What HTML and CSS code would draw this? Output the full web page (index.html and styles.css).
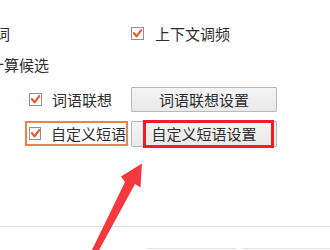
FILE: index.html
```html
<!DOCTYPE html>
<html lang="zh">
<head>
<meta charset="utf-8">
<link rel="stylesheet" href="styles.css">
</head>
<body>
<div class="page">
  <div class="top-row">
    <span class="cut-word">词</span>
    <label class="check ctx-check">
      <span class="box"><svg viewBox="0 0 13 13" width="13" height="13"><path d="M3 6.2 L5.6 9.4 L10.2 3.2" fill="none" stroke="#ec5a2a" stroke-width="2.2" stroke-linecap="round" stroke-linejoin="round"/></svg></span>
      <span>上下文调频</span>
    </label>
  </div>
  <div class="section-title">计算候选</div>
  <div class="option-row">
    <label class="check opt-label">
      <span class="box"><svg viewBox="0 0 13 13" width="13" height="13"><path d="M3 6.2 L5.6 9.4 L10.2 3.2" fill="none" stroke="#ec5a2a" stroke-width="2.2" stroke-linecap="round" stroke-linejoin="round"/></svg></span>
      <span>词语联想</span>
    </label>
    <button class="btn">词语联想设置</button>
  </div>
  <div class="option-row row-gap">
    <label class="check opt-label marked-orange">
      <span class="box"><svg viewBox="0 0 13 13" width="13" height="13"><path d="M3 6.2 L5.6 9.4 L10.2 3.2" fill="none" stroke="#ec5a2a" stroke-width="2.2" stroke-linecap="round" stroke-linejoin="round"/></svg></span>
      <span>自定义短语</span>
    </label>
    <button class="btn btn-marked">自定义短语设置<span class="red-mark"></span></button>
  </div>
  <div class="divider"></div>
  <div class="bottom-buttons">
    <span class="edge edge-one"></span>
    <span class="edge edge-two"></span>
  </div>
  <svg class="arrow" width="330" height="250" viewBox="0 0 330 250">
    <polygon points="91,252 125,182 121,176.5 142,163.5 140.5,187.5 135,184 98,252" fill="#f3393b"/>
  </svg>
</div>
</body>
</html>
```
FILE: styles.css
```css
* { box-sizing: border-box; }
html, body {
  margin: 0;
  padding: 0;
  background: #ffffff;
}
body {
  width: 330px;
  height: 250px;
  overflow: hidden;
  font-family: "Noto Sans CJK SC", "Microsoft YaHei", sans-serif;
  font-size: 15px;
  color: #2e2e2e;
}
.page {
  position: relative;
  width: 330px;
  height: 250px;
  overflow: hidden;
}
.top-row {
  display: grid;
  grid-template-columns: 131px 1fr;
  align-items: center;
  height: 19px;
  margin-top: 24px;
  line-height: 19px;
}
.cut-word {
  margin-left: -5px;
}
.check {
  display: flex;
  align-items: center;
  gap: 10px;
  line-height: 19px;
}
.ctx-check {
  gap: 11px;
}
.box {
  display: block;
  width: 13px;
  height: 13px;
  border: 1px solid #8f9192;
  background: #ffffff;
  position: relative;
}
.box svg {
  position: absolute;
  left: -1px;
  top: -1px;
}
.section-title {
  margin-top: 12px;
  margin-left: -11px;
  height: 19px;
  line-height: 19px;
}
.option-row {
  display: flex;
  align-items: center;
  gap: 3px;
  margin-top: 13px;
  padding-left: 25px;
  height: 25px;
}
.row-gap {
  margin-top: 9px;
}
.opt-label {
  width: 103px;
  height: 25px;
  border: 2px solid transparent;
  padding-left: 2px;
  white-space: nowrap;
  overflow: hidden;
}
.marked-orange {
  border-color: #f08246;
}
.btn {
  position: relative;
  width: 146px;
  height: 25px;
  padding: 0;
  border: 1px solid #b9b9b9;
  border-radius: 1px;
  background: linear-gradient(#f5f5f5, #e9e9e9);
  font-family: inherit;
  font-size: 15px;
  color: #2e2e2e;
  line-height: 23px;
  text-align: center;
}
.btn-marked {
  height: 26px;
}
.red-mark {
  position: absolute;
  left: 11px;
  top: -2px;
  width: 131px;
  height: 28px;
  border: 3px solid #ec1f29;
}
.divider {
  margin-top: 80px;
  height: 1px;
  background: #dde1e5;
}
.bottom-buttons {
  display: flex;
  gap: 6px;
  margin-top: 21px;
  padding-left: 147px;
}
.edge {
  display: block;
  height: 4px;
  border-top: 1px solid #e1e3e6;
}
.edge-one { width: 90px; }
.edge-two { width: 90px; }
.arrow {
  position: absolute;
  left: 0;
  top: 0;
}
```
